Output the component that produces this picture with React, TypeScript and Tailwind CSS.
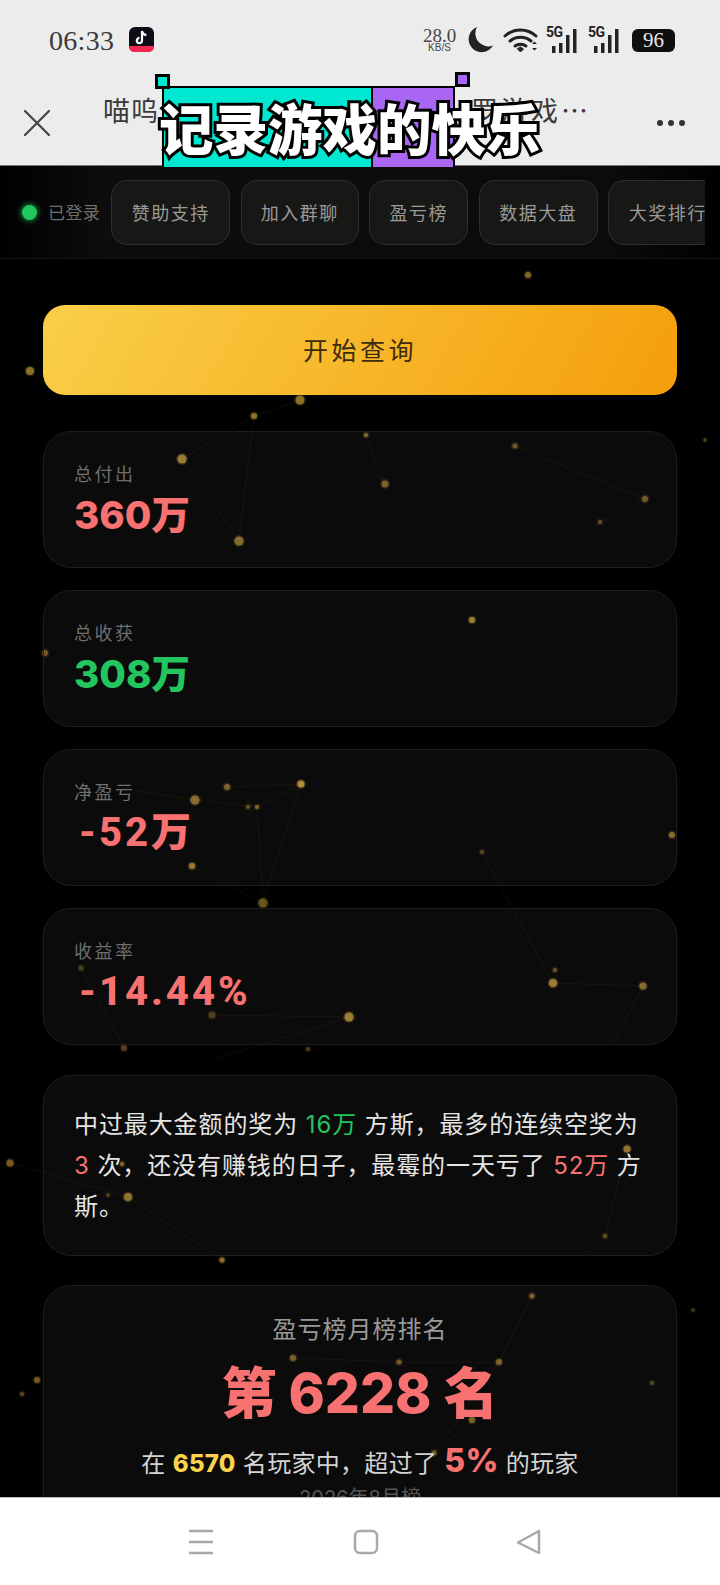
import React from "react";

const SANS = "font-['Inter','Noto_Sans_CJK_SC',sans-serif]";

const dots: [number, number, number, number][] = [
  [528, 275, 3, 0.5], [30, 371, 4, 0.55], [300, 400, 4.5, 0.55], [254, 416, 3, 0.55], [182, 459, 4.5, 0.6], [239, 541, 4.5, 0.5],
  [366, 435, 2, 0.5], [385, 484, 3.5, 0.45], [515, 446, 2.5, 0.4], [645, 499, 3, 0.4], [600, 522, 2, 0.35], [705, 440, 1.5, 0.35],
  [472, 620, 3, 0.6], [45, 653, 3, 0.4], [227, 787, 3, 0.45], [301, 784, 3.5, 0.7], [257, 807, 2, 0.45], [248, 807, 2, 0.35],
  [195, 800, 4.5, 0.5], [192, 866, 3, 0.6], [263, 903, 4.5, 0.4], [482, 852, 2, 0.3], [672, 835, 3, 0.5], [81, 968, 2.5, 0.25],
  [212, 1015, 3.5, 0.25], [349, 1017, 4.5, 0.6], [124, 1048, 3, 0.3], [308, 1049, 2, 0.3], [553, 983, 4, 0.6], [643, 986, 3.5, 0.5],
  [555, 970, 2, 0.4], [10, 1163, 3.5, 0.45], [122, 1164, 2, 0.5], [128, 1197, 4, 0.55], [108, 1195, 1.5, 0.35],
  [627, 1149, 3.5, 0.55], [605, 1236, 2, 0.35], [532, 1296, 2.5, 0.45], [693, 1310, 1.5, 0.3], [37, 1380, 3, 0.45],
  [22, 1394, 2, 0.35], [293, 1358, 3, 0.45], [399, 1362, 2.5, 0.4], [499, 1362, 3, 0.45], [472, 1420, 3, 0.45], [434, 1453, 2.5, 0.4],
  [652, 1383, 2, 0.3], [222, 1260, 2.5, 0.55],
];

const lines: [number, number, number, number][] = [
  [182, 459, 254, 416], [254, 416, 300, 400], [182, 459, 239, 541], [254, 416, 239, 541], [300, 400, 385, 484], [385, 484, 366, 435],
  [515, 446, 645, 499], [645, 499, 600, 522], [227, 787, 301, 784], [195, 800, 257, 807], [301, 784, 257, 807], [257, 807, 192, 866],
  [301, 784, 263, 903], [257, 807, 263, 903], [227, 787, 257, 807], [135, 790, 195, 800], [192, 866, 263, 903],
  [553, 983, 643, 986], [643, 986, 612, 1045], [349, 1017, 212, 1060], [212, 1015, 349, 1017], [124, 1048, 81, 968], [482, 852, 553, 983],
  [10, 1163, 128, 1197], [128, 1197, 222, 1260], [627, 1149, 605, 1236], [605, 1236, 580, 1265], [293, 1358, 399, 1362], [399, 1362, 499, 1362],
  [532, 1296, 499, 1362], [499, 1362, 434, 1453], [472, 1420, 434, 1453], [399, 1362, 472, 1420],
];

function Particles() {
  return (
    <svg className="absolute left-0 top-0 blur-[0.5px]" width="720" height="1585" viewBox="0 0 720 1585">
      {lines.map(([a, b, c, d], i) => (
        <line key={i} x1={a} y1={b} x2={c} y2={d} stroke="#d9a93a" strokeOpacity="0.07" strokeWidth="1" />
      ))}
      {dots.map(([x, y, r, o], i) => (
        <g key={i}>
          <circle cx={x} cy={y} r={r + 1.5} fill="#e0b040" opacity={o * 0.3} />
          <circle cx={x} cy={y} r={r} fill="#e0b040" opacity={o} />
        </g>
      ))}
    </svg>
  );
}

function Signal() {
  return (
    <div className="relative h-[26px] w-[33px]">
      <span className="absolute left-0 top-[-2px] text-[14px] font-bold leading-[14px] tracking-[-0.5px] text-[#222] font-['Roboto',sans-serif]">5G</span>
      <svg className="absolute left-0 top-0" width="33" height="26" viewBox="0 0 33 26" fill="#222">
        <rect x="6" y="19" width="3.5" height="7" />
        <rect x="13" y="16" width="3.5" height="10" />
        <rect x="20" y="8" width="3.5" height="18" />
        <rect x="27" y="2" width="3.5" height="24" />
      </svg>
    </div>
  );
}

function StatusBar() {
  return (
    <div className="flex h-[80px] shrink-0 items-center pl-[49px] pr-[45px]">
      <span className="w-[80px] pt-[1px] text-[28px] tracking-[0.3px] text-[#3a3a3a] font-['Liberation_Serif',serif]">06:33</span>
      <svg className="h-[26px] w-[25px]" viewBox="0 0 25 26">
        <rect x="0" y="0" width="25" height="25" rx="6" fill="#0d0d16" />
        <path d="M0 19h25v1a5 5 0 0 1-5 5H5a5 5 0 0 1-5-5z" fill="#f4284f" />
        <path d="M13 4v9.5a2.6 2.6 0 1 1-2.6-2.6M13 4c.4 2.400 2 3.800 4.400 4" fill="none" stroke="#fff" strokeWidth="2.200" />
      </svg>
      <div className="flex-1" />
      <div className="flex w-[33px] flex-col items-center text-[#444] font-['Liberation_Serif',serif]">
        <span className="text-[19px] leading-[15px]">28.0</span>
        <span className="text-[10px] leading-[10px] font-['Liberation_Sans',sans-serif]">KB/S</span>
      </div>
      <svg className="ml-[11px] h-[26px] w-[26px]" viewBox="0 0 26 26">
        <path d="M10 0a13 13 0 1 0 16 18.500A13 13 0 0 1 10 0z" fill="#222" />
      </svg>
      <svg className="ml-[10px] h-[26px] w-[35px]" viewBox="0 0 35 26" fill="none" stroke="#222" strokeLinecap="round">
        <path d="M2 9C11 1 24 1 33 9" strokeWidth="3" />
        <path d="M7 14c6-5 15-5 21 0" strokeWidth="3" />
        <path d="M12 19c3-2.500 8-2.500 11 0" strokeWidth="3" />
        <path d="M14.500 22 17.500 25l3-3-3-2z" fill="#222" strokeWidth="1" />
        <path d="M29 17l2.500-2.500L34 17zM29 21l2.500 2.500L34 21z" fill="#222" stroke="none" />
      </svg>
      <div className="ml-[8px]"><Signal /></div>
      <div className="ml-[9px]"><Signal /></div>
      <div className="ml-[11px] flex h-[23px] w-[43px] items-center justify-center rounded-[6px] bg-[#0f0f0f] text-[21px] leading-none text-[#e8e8e8] font-['Liberation_Serif',serif]">96</div>
    </div>
  );
}

function TitleBar() {
  return (
    <div className="flex h-[86px] shrink-0 items-center pl-[24px] pr-[35px]">
      <svg className="h-[26px] w-[26px]" viewBox="0 0 26 26" stroke="#444" strokeWidth="2.200" strokeLinecap="round">
        <path d="M1 1 25 25M25 1 1 25" />
      </svg>
      <div className="ml-[53px] flex w-[488px] items-center justify-between pb-[28px] text-[27px] leading-none tracking-[1px] text-[#3a3a3a] font-['Noto_Sans_CJK_SC',sans-serif]">
        <span>喵呜</span>
        <span className="tracking-[3px]">罗游戏…</span>
      </div>
      <div className="flex-1" />
      <div className="flex gap-[5px]">
        <span className="h-[6px] w-[6px] rounded-full bg-[#333]" />
        <span className="h-[6px] w-[6px] rounded-full bg-[#333]" />
        <span className="h-[6px] w-[6px] rounded-full bg-[#333]" />
      </div>
    </div>
  );
}

function Caption() {
  return (
    <div className="absolute left-[162px] top-[86px] h-[81px] w-[293px]">
      <div className="flex h-full border-[2px] border-b-0 border-black">
        <div className="w-[209px] border-r-[2px] border-black bg-[#00e8d2]" />
        <div className="flex-1 bg-[#a966f5]" />
      </div>
      <div className="absolute left-[-7px] top-[-12px] h-[15px] w-[15px] border-[3px] border-black bg-[#00e8d2]" />
      <div className="absolute left-[293px] top-[-14px] h-[15px] w-[15px] border-[3px] border-black bg-[#a966f5]" />
      <div className="absolute left-[-3px] top-[8px] whitespace-nowrap text-[54.500px] font-black leading-[66px] text-white [paint-order:stroke_fill] [-webkit-text-stroke:6px_#000] [text-shadow:2px_2px_0_#000] font-['Noto_Sans_CJK_SC',sans-serif]">
        记录游戏的快乐
      </div>
    </div>
  );
}

const tabs = [
  ["赞助支持", "w-[119px]"],
  ["加入群聊", "w-[118px]"],
  ["盈亏榜", "w-[99px]"],
  ["数据大盘", "w-[119px]"],
  ["大奖排行", "w-[119px]"],
];

function Nav() {
  return (
    <div className="relative flex h-[93px] shrink-0 items-center border-b border-[#151515] bg-[linear-gradient(90deg,#000,#0d0d0d_15%,#0b0b0b_85%,#000)] pl-[22px]">
      <span className="h-[15px] w-[15px] rounded-full bg-[#22c55e] shadow-[0_0_6px_#22c55e]" />
      <span className="ml-[11px] text-[17px] tracking-[0.4px] text-[#6f6f6f] font-['Noto_Sans_CJK_SC',sans-serif]">已登录</span>
      <div className="ml-[11px] flex w-[594px] gap-[10.500px] overflow-hidden">
        {tabs.map(([t, w]) => (
          <div
            key={t}
            className={`${w} flex h-[65px] shrink-0 items-center justify-center whitespace-nowrap rounded-[16px] border-[1.500px] border-[#2e2e2e] bg-[#171716] text-[18px] tracking-[1.500px] text-[#9a9a96] font-['Noto_Sans_CJK_SC',sans-serif]`}
          >
            {t}
          </div>
        ))}
      </div>
    </div>
  );
}

function Stat({ label, value, color, sub }: { label: string; value: string; color: string; sub?: boolean }) {
  return (
    <div className="flex h-[137px] flex-col rounded-[28px] border border-[#1e1e1e] bg-white/[0.045] pl-[30px] pt-[29px]">
      <span className="text-[18px] leading-[24px] tracking-[2.500px] text-[#6e6e6e] font-['Noto_Sans_CJK_SC',sans-serif]">{label}</span>
      <span
        className={`${color} ${sub ? "pl-[5px] text-[40px] font-extrabold tracking-[3px] font-['Roboto','Noto_Sans_CJK_SC',sans-serif]" : "text-[38.500px] font-extrabold font-['Inter','Noto_Sans_CJK_SC',sans-serif]"} mt-[6px] leading-[48px]`}
      >
        {value}
      </span>
    </div>
  );
}

function Bottom() {
  return (
    <div className="flex h-[88px] shrink-0 items-center border-t-[1px] border-[#bbb] bg-white pl-[188px]">
      <svg width="26" height="26" viewBox="0 0 26 26" stroke="#a8a8a8" strokeWidth="2.500">
        <path d="M1 2h24M1 13h24M1 24h24" />
      </svg>
      <svg className="ml-[139px]" width="26" height="26" viewBox="0 0 26 26" fill="none" stroke="#a8a8a8" strokeWidth="2.500">
        <rect x="2" y="2" width="22" height="22" rx="5" />
      </svg>
      <svg className="ml-[137px]" width="26" height="26" viewBox="0 0 26 26" fill="none" stroke="#a8a8a8" strokeWidth="2.500" strokeLinejoin="round">
        <path d="M23 2v22L2 13.500z" />
      </svg>
    </div>
  );
}

export default function App() {
  return (
    <div className="relative flex h-[1585px] w-[720px] flex-col overflow-hidden bg-black">
      <Particles />
      <div className="relative z-10 h-[166px] shrink-0 border-b border-[#777] bg-[#ececec]">
        <StatusBar />
        <TitleBar />
      </div>
      <div className="relative z-10"><Nav /></div>
      <main className={`relative min-h-0 flex-1 overflow-hidden px-[43px] pt-[46px] ${SANS}`}>
        <div className="flex h-[90px] items-center justify-center rounded-[22px] bg-[linear-gradient(120deg,#f9cf48,#f59e0b)] text-[25px] tracking-[3.500px] text-[#3b2c0c] font-['Noto_Sans_CJK_SC',sans-serif]">
          开始查询
        </div>
        <div className="mt-[36px] flex flex-col gap-[22px]">
          <Stat label="总付出" value="360万" color="text-[#f87171]" />
          <Stat label="总收获" value="308万" color="text-[#22c55e]" />
          <Stat label="净盈亏" value="-52万" color="text-[#f87171]" sub />
          <Stat label="收益率" value="-14.44%" color="text-[#f87171]" sub />
        </div>
        <div className="mt-[30px] h-[181px] rounded-[28px] border border-[#1e1e1e] bg-white/[0.045] pl-[30px] pr-[30px] pt-[28px] text-[24px] leading-[41px] tracking-[0.9px] text-[#e5e5e5]">
          中过最大金额的奖为 <span className="text-[#22c55e]">16万</span> 方斯，最多的连续空奖为 <span className="text-[#f87171]">3</span> 次，还没有赚钱的日子，最霉的一天亏了 <span className="text-[#f87171]">52万</span> 方斯。
        </div>
        <div className="mt-[29px] flex h-[300px] flex-col items-center rounded-[28px] border border-[#1e1e1e] bg-white/[0.045] pt-[27px]">
          <span className="text-[24px] leading-[34px] tracking-[1px] text-[#999]">盈亏榜月榜排名</span>
          <span className="mt-[10px] text-[55px] font-extrabold leading-[72px] text-[#f87171]">第 6228 名</span>
          <span className="mt-[13px] text-[24px] leading-[38px] tracking-[0.3px] text-[#d4d4d4]">
            在 <b className="font-extrabold text-[#fcd34d]">6570</b> 名玩家中，超过了 <b className="text-[32px] font-extrabold text-[#f87171]">5%</b> 的玩家
          </span>
          <span className="mt-[1px] text-[20px] leading-[28px] text-[#555]">2026年8月榜</span>
        </div>
      </main>
      <div className="relative z-10"><Bottom /></div>
      <div className="absolute left-0 top-0 z-20 h-0 w-0"><Caption /></div>
    </div>
  );
}
